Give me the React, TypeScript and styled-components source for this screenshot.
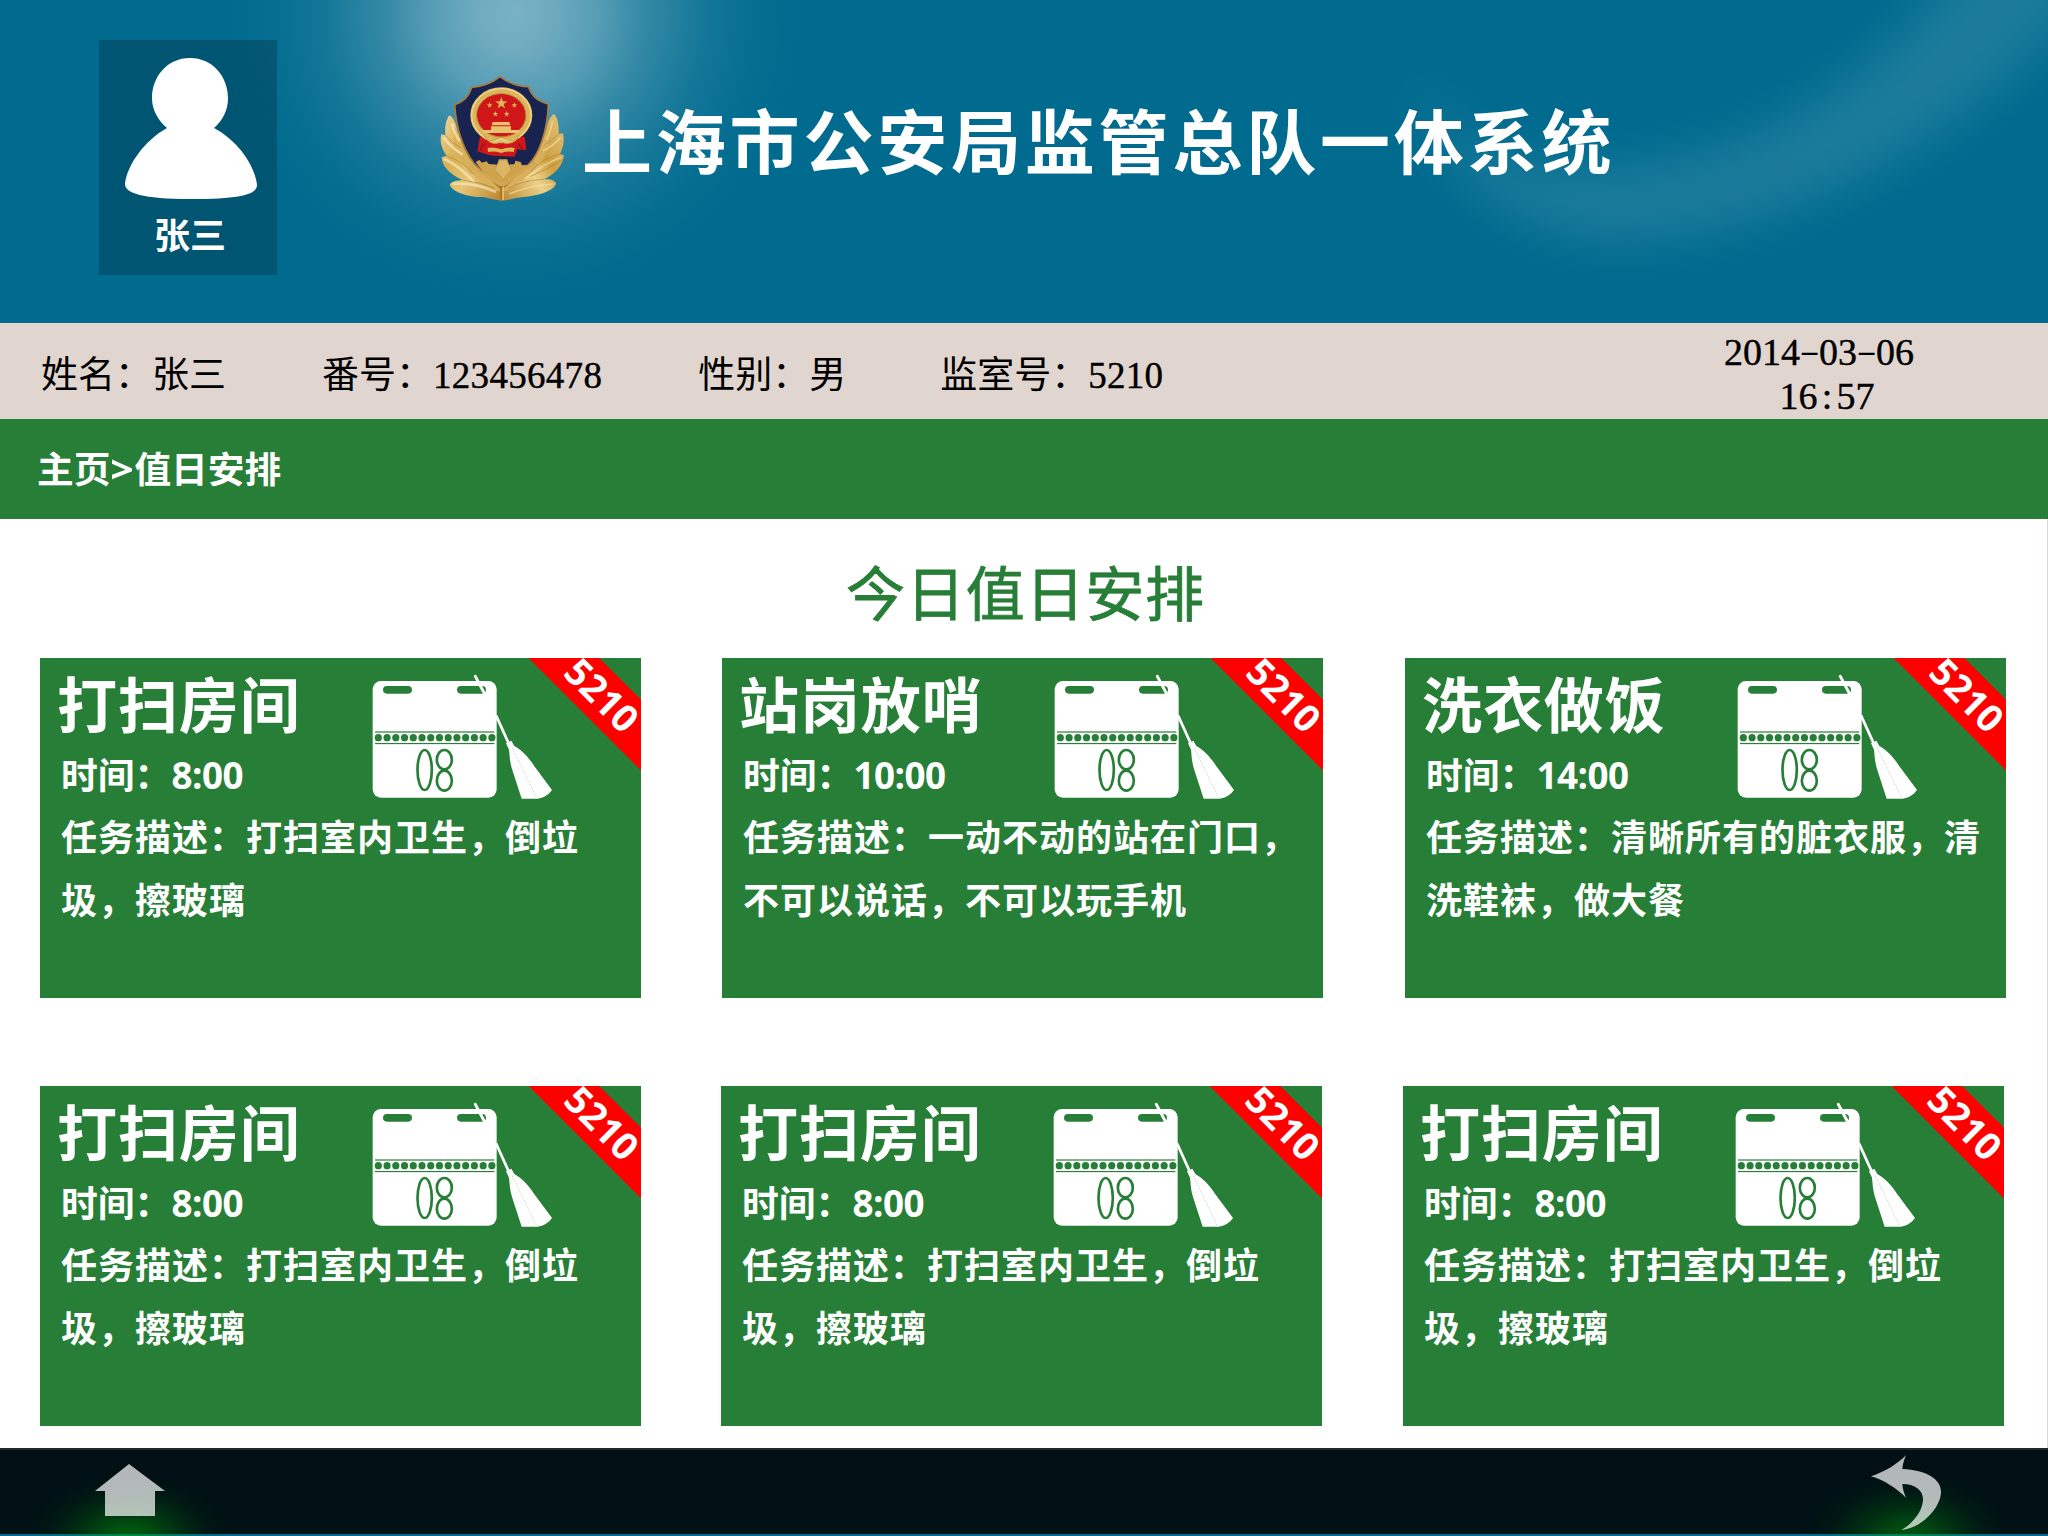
import React from 'react';
import styled, { createGlobalStyle } from 'styled-components';

const GREEN = '#277e37';
const SANS = `"Open Sans", "Noto Sans CJK SC", sans-serif`;
const SERIF = `"Liberation Serif", "Noto Sans CJK SC", serif`;

const GlobalStyle = createGlobalStyle`
  * { box-sizing: border-box; }
  body { margin: 0; background: #006b8f; }
`;

const Screen = styled.div`
  width: 2048px;
  height: 1536px;
  display: flex;
  flex-direction: column;
  overflow: hidden;
  background: #006b8f;
  font-family: ${SANS};
`;

const Header = styled.header`
  position: relative;
  height: 323px;
  flex: none;
  display: flex;
  align-items: flex-start;
  padding-left: 99px;
  background:
    radial-gradient(circle 290px at 514px 14px,
      rgba(255, 255, 255, 0.48) 0%,
      rgba(255, 255, 255, 0.44) 12%,
      rgba(255, 255, 255, 0.33) 30%,
      rgba(255, 255, 255, 0.19) 47%,
      rgba(255, 255, 255, 0.08) 66%,
      rgba(255, 255, 255, 0.02) 84%,
      rgba(255, 255, 255, 0) 100%),
    #006b8f;
`;

const Swoosh = styled.svg`
  position: absolute;
  right: 0;
  top: 0;
`;

const UserCard = styled.div`
  width: 178px;
  height: 235px;
  margin-top: 40px;
  display: flex;
  flex-direction: column;
  align-items: center;
  background: rgba(0, 0, 0, 0.2);
`;

const UserFigure = styled.svg`
  margin: 17px 0 0 6px;
  flex: none;
`;

const UserName = styled.div`
  margin-top: 9px;
  padding-left: 4px;
  font-size: 36px;
  line-height: 54px;
  font-weight: 700;
  color: #fff;
`;

const Emblem = styled.svg`
  margin: 60px 0 0 143px;
  flex: none;
`;

const SystemTitle = styled.h1`
  position: relative;
  margin: 92px 0 0 2px;
  font-size: 70px;
  line-height: 100px;
  letter-spacing: 3.8px;
  font-weight: 700;
  white-space: nowrap;
  color: #fff;
`;

const InfoBar = styled.section`
  height: 96px;
  flex: none;
  display: flex;
  background: #e1d5cf;
  color: #000;
  font-family: ${SERIF};
  font-size: 37px;
`;

const InfoItem = styled.div<{ $before: number }>`
  margin-left: ${(p) => p.$before}px;
  padding-top: 27px;
  line-height: 52px;
  white-space: nowrap;
`;

const Digits = styled.span`
  letter-spacing: 0.3px;
  -webkit-text-stroke: 0.4px #000;
`;

const Clock = styled.div`
  margin-left: auto;
  margin-right: 134px;
  padding-top: 7px;
  font-size: 38px;
  line-height: 44px;
  text-align: center;
  -webkit-text-stroke: 0.4px #000;
`;

const TimeLine = styled.div`
  padding-left: 16px;
`;

const HalfCell = styled.span<{ $stretch?: number }>`
  display: inline-block;
  width: 0.5em;
  text-align: center;
  transform: scaleX(${(p) => p.$stretch ?? 1});
`;

const ThinDash = styled(HalfCell)`
  transform: translateY(-1px) scale(1.6, 0.8);
  -webkit-text-stroke: 0;
`;

const Breadcrumb = styled.nav`
  height: 100px;
  flex: none;
  padding-left: 37px;
  background: ${GREEN};
  color: #fff;
  font-size: 36.7px;
  line-height: 101px;
  font-weight: 700;
`;

const Separator = styled.span`
  display: inline-block;
  width: 24px;
  text-align: center;
  transform: scaleX(1.12);
`;

const Content = styled.main`
  height: 929px;
  flex: none;
  background: #fff;
  border-right: 1px solid #e1d5cf;
`;

const Heading = styled.h2`
  margin: 0;
  height: 139px;
  padding-top: 24px;
  padding-left: 4px;
  text-align: center;
  font-size: 59px;
  letter-spacing: 0.8px;
  line-height: 100px;
  font-weight: 400;
  -webkit-text-stroke: 0.8px ${GREEN};
  color: ${GREEN};
`;

const CardRow = styled.div<{ $columns: string }>`
  display: grid;
  grid-template-columns: ${(p) => p.$columns};
  padding-left: 40px;
  margin-bottom: 88px;
`;

const Card = styled.article`
  position: relative;
  width: 601px;
  height: 340px;
  overflow: hidden;
  background: ${GREEN};
  color: #fff;
`;

const CardTop = styled.div`
  display: flex;
  height: 148px;
`;

const CardText = styled.div`
  width: 330px;
  flex: none;
`;

const DutyName = styled.h3`
  margin: 0;
  padding: 7px 0 0 17px;
  font-size: 60px;
  line-height: 80px;
  letter-spacing: 0.9px;
  font-weight: 700;
  white-space: nowrap;
`;

const DutyTime = styled.div`
  padding: 4px 0 0 21px;
  font-size: 36.8px;
  line-height: 52px;
  font-weight: 700;
  white-space: nowrap;
`;

const TimeValue = styled.span`
  letter-spacing: -0.5px;
`;

const DutyIcon = styled.svg`
  margin-top: 16px;
  flex: none;
`;

const Description = styled.p`
  margin: 0;
  width: 580px;
  padding-left: 21px;
  font-size: 36px;
  letter-spacing: 1px;
  line-height: 63.3px;
  font-weight: 700;
`;

const Ribbon = styled.div`
  position: absolute;
  left: 442.5px;
  top: 13.5px;
  width: 240px;
  height: 49.6px;
  transform: rotate(45deg);
  background: #f00;
  text-align: center;
  font-size: 37.5px;
  line-height: 47px;
  padding-right: 4px;
  font-weight: 700;
`;

const Footer = styled.footer`
  height: 88px;
  flex: none;
  display: flex;
  justify-content: space-between;
  border-top: 2px solid #262626;
  background:
    radial-gradient(ellipse 104px 64px at 129px 88px, rgba(0, 160, 10, 0.56), rgba(0, 150, 10, 0.44) 25%, rgba(0, 140, 10, 0.24) 50%, rgba(0, 120, 10, 0.08) 75%, rgba(0, 100, 0, 0)),
    radial-gradient(ellipse 104px 64px at 1909px 88px, rgba(0, 160, 10, 0.5), rgba(0, 150, 10, 0.4) 25%, rgba(0, 140, 10, 0.22) 50%, rgba(0, 120, 10, 0.08) 75%, rgba(0, 100, 0, 0)),
    linear-gradient(to top, #006b8f 2px, #001014 2px);
`;

const IconButton = styled.button<{ $left?: number; $right?: number }>`
  margin: 0 ${(p) => p.$right ?? 0}px 0 ${(p) => p.$left ?? 0}px;
  padding: 0;
  border: 0;
  height: 84px;
  background: none;
  svg { display: block; }
`;

const CalendarBroom = () => (
  <DutyIcon width="185" height="126" viewBox="30 42 555 378">
    <rect x="38" y="63" width="372" height="350" rx="25" fill="#fff" />
    <rect x="69" y="78" width="87" height="23" rx="11.5" fill={GREEN} />
    <rect x="291" y="78" width="87" height="23" rx="11.5" fill={GREEN} />
    <path d="M346 49 L372 98" stroke="#fff" strokeWidth="9" strokeLinecap="round" />
    <rect x="45" y="213" width="358" height="6" fill={GREEN} opacity="0.6" />
    <rect x="45" y="249" width="358" height="3.4" fill={GREEN} />
    {Array.from({ length: 14 }, (_, i) => (
      <circle key={i} cx={55 + i * 26.2} cy="233" r="10.8" fill={GREEN} />
    ))}
    <g fill="none" stroke={GREEN} strokeWidth="8">
      <ellipse cx="194" cy="330" rx="21.5" ry="60" />
      <ellipse cx="253" cy="299" rx="22.5" ry="29" />
      <ellipse cx="253" cy="362" rx="22.5" ry="30" />
    </g>
    <path d="M408 166 L446 250" stroke="#fff" strokeWidth="8" />
    <path d="M438 250 L454 242 L463 258 C485 270 505 291 522 317 L576 390 C565 406 550 413 533 416 L485 416 L456 327 C449 305 449 285 447 269 Z" fill="#fff" />
    <path d="M457 264 L530 414" stroke={GREEN} strokeWidth="1.6" strokeDasharray="4 4" opacity="0.55" />
  </DutyIcon>
);

const starPath = (cx: number, cy: number, r: number) =>
  Array.from({ length: 10 }, (_, i) => {
    const a = (Math.PI / 5) * i - Math.PI / 2;
    const d = i % 2 ? r * 0.4 : r;
    return `${cx + d * Math.cos(a)},${cy + d * Math.sin(a)}`;
  }).join(' ');

const PoliceEmblem = () => (
  <Emblem width="160" height="150" viewBox="0 0 480 450">
    <defs>
      <linearGradient id="gold" x1="0" y1="0" x2="1" y2="1">
        <stop offset="0" stopColor="#efd89a" />
        <stop offset="0.35" stopColor="#d9b055" />
        <stop offset="0.6" stopColor="#e6c677" />
        <stop offset="1" stopColor="#ba842b" />
      </linearGradient>
      <linearGradient id="goldRight" x1="1" y1="0" x2="0" y2="1">
        <stop offset="0" stopColor="#e4c57c" />
        <stop offset="0.4" stopColor="#cfa041" />
        <stop offset="0.6" stopColor="#ecd28b" />
        <stop offset="1" stopColor="#bd8730" />
      </linearGradient>
    </defs>
    <path d="M88 166 C100 172 108 190 112 212 L160 310 L245 385 L245 422 C222 420 200 412 188 411 C150 412 98 398 89 374 C96 364 108 361 127 360 C90 342 65 318 65 291 L80 288 C66 268 58 244 64 222 L76 226 C74 200 78 180 88 166 Z" fill="url(#gold)" />
    <path d="M402 162 C388 170 382 190 378 214 L328 310 L245 385 L245 422 C270 420 290 412 310 411 C350 408 400 396 409 370 C400 359 390 358 372 358 C405 342 428 318 432 286 L420 282 C430 262 434 242 429 220 L416 222 C417 196 414 174 402 162 Z" fill="url(#goldRight)" />
    <path d="M104 200 L165 306 L245 378 L325 306 L384 200 L384 270 L345 330 L262 392 L230 392 L150 340 L100 270 Z" fill="#d8b05a" />
    <g fill="none" stroke="#fbf0c9" strokeWidth="8" opacity="0.6">
      <path d="M70 232 Q92 262 128 284" />
      <path d="M72 296 Q120 318 164 368" />
      <path d="M96 372 Q160 366 228 396" />
      <path d="M96 190 Q104 224 120 244" />
    </g>
    <g fill="none" stroke="#a8772a" strokeWidth="3" opacity="0.5">
      <path d="M80 288 Q125 302 160 340" />
      <path d="M127 360 Q180 366 225 384" />
      <path d="M76 226 Q98 252 122 262" />
      <path d="M416 222 Q395 245 374 254" />
      <path d="M420 282 Q370 292 330 335" />
      <path d="M372 358 Q310 360 262 386" />
      <path d="M426 300 Q380 330 330 350" />
    </g>
    <g fill="none" stroke="#f8e6ac" strokeWidth="5" opacity="0.6">
      <path d="M422 232 Q400 260 368 272" />
      <path d="M424 292 Q370 312 316 356" />
      <path d="M398 372 Q330 376 268 402" />
      <path d="M398 182 Q394 210 380 240" />
    </g>
    <path d="M240 50 C270 72 300 80 325 80 C338 112 352 122 385 132 C382 220 355 285 325 314 L245 388 L162 310 C130 270 108 205 104 134 C130 126 148 108 155 82 C185 80 215 70 240 50 Z" fill="#18244f" stroke="#a87b40" strokeWidth="5" />
    <path d="M167 306 L178 300 L186 308 L200 304 L206 312 L234 314 L236 298 L262 298 L266 314 L284 312 L286 302 L302 306 L306 316 L322 314 L300 342 L245 384 L192 340 Z" fill="#cfa34b" />
    <path d="M238 300 L260 300 L274 330 L250 358 L224 330 Z" fill="#dcb664" stroke="#b98b3e" strokeWidth="2" />
    <path d="M150 316 L246 378 L345 306" fill="none" stroke="#d2a655" strokeWidth="9" />
    <path d="M245 378 L245 420" stroke="#a8752a" strokeWidth="9" />
    <path d="M249 380 L249 420" stroke="#f0d489" strokeWidth="4" />
    <path d="M180 230 L314 230 L319 270 L292 268 L284 290 L222 287 L203 284 L172 274 Z" fill="#cf1619" />
    <ellipse cx="243" cy="166" rx="89" ry="78" fill="#cc1a1c" />
    <ellipse cx="244" cy="166" rx="83" ry="74" fill="none" stroke="#dcb45b" strokeWidth="20" />
    <ellipse cx="244" cy="166" rx="89" ry="80" fill="none" stroke="#f1d68d" strokeWidth="4" />
    <ellipse cx="244" cy="166" rx="74" ry="65" fill="none" stroke="#b48334" strokeWidth="3" />
    <ellipse cx="243" cy="163" rx="71" ry="60" fill="#cf1619" />
    <g fill="#e2b455">
      <polygon points={starPath(244, 130, 19)} />
      <polygon points={starPath(209, 136, 9)} />
      <polygon points={starPath(283, 136, 9)} />
      <polygon points={starPath(226, 162, 9)} />
      <polygon points={starPath(260, 162, 9)} />
    </g>
    <path d="M218 186 H268 L271 196 H215 Z M213 199 H273 V210 H298 V219 H188 V210 H213 Z" fill="#e8c46e" />
    <path d="M191 226 Q210 250 226 238 Q244 226 262 238 Q280 250 297 226 L286 242 Q266 256 244 246 Q220 256 204 242 Z" fill="#e7c778" stroke="#c99c48" strokeWidth="3" />
    <path d="M203 264 Q220 260 244 268 Q268 260 284 264 L281 276 Q262 272 244 279 Q222 272 204 276 Z" fill="#dfb55c" />
    <path d="M194 250 Q186 258 180 272 M294 250 Q302 258 308 268" stroke="#8e1618" strokeWidth="4" fill="none" />
  </Emblem>
);

interface Duty {
  name: string;
  time: string;
  text: string;
}

const cleaning: Duty = { name: '打扫房间', time: '8:00', text: '打扫室内卫生，倒垃圾，擦玻璃' };

const rows: { columns: string; duties: Duty[] }[] = [
  {
    columns: '682px 683px 601px',
    duties: [
      cleaning,
      { name: '站岗放哨', time: '10:00', text: '一动不动的站在门口，不可以说话，不可以玩手机' },
      { name: '洗衣做饭', time: '14:00', text: '清晰所有的脏衣服，清洗鞋袜，做大餐' },
    ],
  },
  { columns: '681px 682px 601px', duties: [cleaning, cleaning, cleaning] },
];

const DutyCard = ({ duty }: { duty: Duty }) => (
  <Card>
    <CardTop>
      <CardText>
        <DutyName>{duty.name}</DutyName>
        <DutyTime>时间：<TimeValue>{duty.time}</TimeValue></DutyTime>
      </CardText>
      <CalendarBroom />
    </CardTop>
    <Description>任务描述：{duty.text}</Description>
    <Ribbon>5210</Ribbon>
  </Card>
);

export default function App() {
  return (
    <>
      <GlobalStyle />
      <Screen>
        <Header>
          <Swoosh width="748" height="323" viewBox="0 0 748 323">
            <defs>
              <filter id="soft" x="-20%" y="-40%" width="140%" height="180%">
                <feGaussianBlur stdDeviation="23" />
              </filter>
            </defs>
            <path
              d="M110 70 C160 160 220 174 320 168 C480 154 600 60 680 -60 L830 -60 C710 110 520 230 330 240 C210 240 140 170 110 70 Z"
              fill="#fff"
              opacity="0.108"
              filter="url(#soft)"
            />
          </Swoosh>
          <UserCard>
            <UserFigure width="134" height="143" viewBox="0 0 134 143">
              <path
                d="M66 1 C89 1 104 20 104 41 C104 53 99 63 90 71 C113 83 131 108 133 128 C133 137 118 142 67 142 C18 142 1 136 1 127 C3 108 21 83 43 71 C34 63 28 53 28 41 C28 20 43 1 66 1 Z"
                fill="#fff"
              />
            </UserFigure>
            <UserName>张三</UserName>
          </UserCard>
          <PoliceEmblem />
          <SystemTitle>上海市公安局监管总队一体系统</SystemTitle>
        </Header>
        <InfoBar>
          <InfoItem $before={41}>姓名：张三</InfoItem>
          <InfoItem $before={96}>番号：<Digits>123456478</Digits></InfoItem>
          <InfoItem $before={96}>性别：男</InfoItem>
          <InfoItem $before={94}>监室号：<Digits>5210</Digits></InfoItem>
          <Clock>
            <div>2014<ThinDash>-</ThinDash>03<ThinDash>-</ThinDash>06</div>
            <TimeLine>16<HalfCell>:</HalfCell>57</TimeLine>
          </Clock>
        </InfoBar>
        <Breadcrumb>主页<Separator>&gt;</Separator>值日安排</Breadcrumb>
        <Content>
          <Heading>今日值日安排</Heading>
          {rows.map((row, r) => (
            <CardRow key={r} $columns={row.columns}>
              {row.duties.map((duty, i) => (
                <DutyCard key={i} duty={duty} />
              ))}
            </CardRow>
          ))}
        </Content>
        <Footer>
          <IconButton $left={95} aria-label="home">
            <svg width="70" height="84" viewBox="0 0 70 84">
              <path d="M34 14 L70 41 H60 V66 H10 V41 H0 Z" fill="#fff" opacity="0.7" />
            </svg>
          </IconButton>
          <IconButton $right={106} aria-label="back">
            <svg width="72" height="84" viewBox="390 90 216 252">
              <path
                d="M393 169 C434 156 472 132 498 106 C492 120 488 134 487 147 C560 150 603 178 603 215 C603 262 545 325 484 330 C520 310 549 272 549 238 C549 210 525 192 487 192 C488 206 492 220 498 233 C468 204 432 180 393 169 Z"
                fill="#fff"
                opacity="0.7"
              />
            </svg>
          </IconButton>
        </Footer>
      </Screen>
    </>
  );
}
